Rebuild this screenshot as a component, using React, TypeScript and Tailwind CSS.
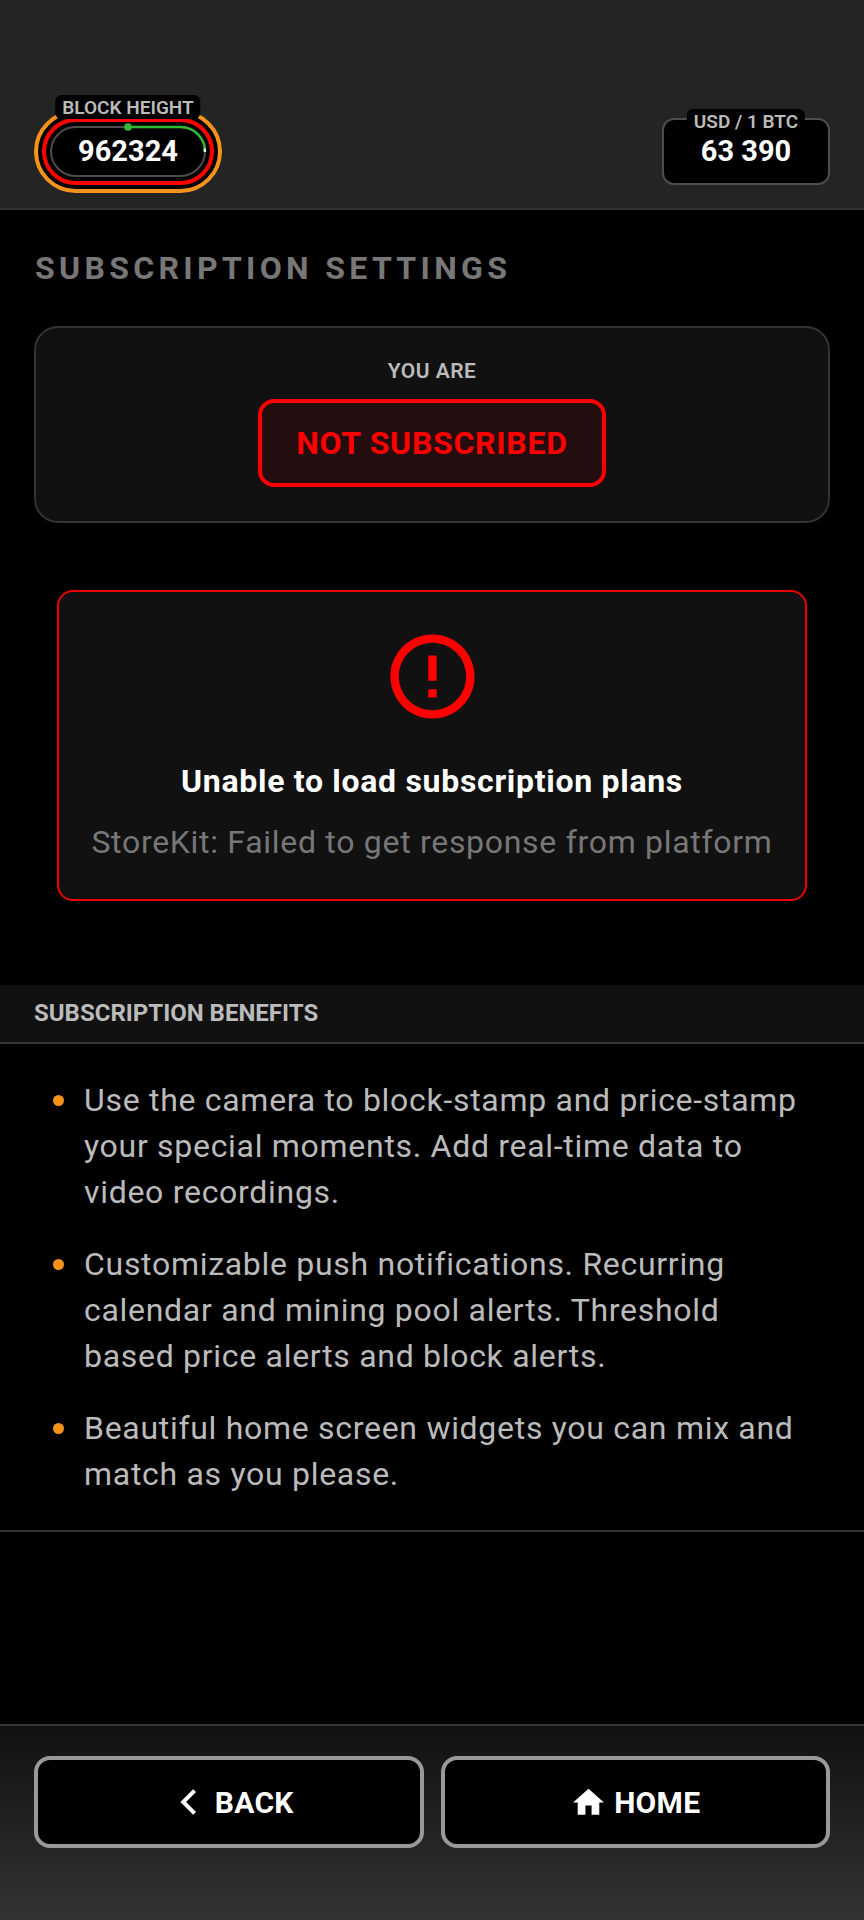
import React from 'react';
import { MdErrorOutline } from 'react-icons/md';

const BENEFITS = [
  'Use the camera to block-stamp and price-stamp your special moments. Add real-time data to video recordings.',
  'Customizable push notifications. Recurring calendar and mining pool alerts. Threshold based price alerts and block alerts.',
  'Beautiful home screen widgets you can mix and match as you please.',
];

function BlockHeight({ height }: { height: number }) {
  return (
    <div className="relative rounded-full border-4 border-[#f7931a] bg-black p-1">
      <div className="rounded-full border-4 border-[#ff0000] p-1">
        <div className="relative flex h-[51px] w-[156px] items-center justify-center">
          <span className="text-[29px] leading-none font-bold text-white">{height}</span>
        </div>
      </div>
      <span className="absolute -top-[19px] left-1/2 -translate-x-1/2 rounded-md bg-black px-[7px] pt-px text-[19px] leading-[23px] font-semibold whitespace-nowrap text-[#bbbbbb]">
        BLOCK HEIGHT
      </span>
      {/* Progress track */}
      <svg
        className="absolute top-3 left-3 overflow-visible"
        width="156"
        height="51"
        viewBox="0 0 156 51"
        fill="none"
      >
        <rect x="1" y="1" width="154" height="49" rx="24.5" stroke="#4d4d4d" strokeWidth="2" />
        <path d="M78 1H130.5A24.5 24.5 0 0 1 155 25.5" stroke="#33b933" strokeWidth="2.4" />
        <path d="M154.7 22.5L155 26" stroke="#dff5df" strokeWidth="2.4" />
        <circle cx="78" cy="1" r="3.8" fill="#33b933" />
      </svg>
    </div>
  );
}

function Price({ value }: { value: string }) {
  return (
    <div className="relative flex h-[67px] w-[168px] items-center justify-center rounded-xl border-2 border-[#4d4d4d] bg-black">
      <span className="text-[29px] leading-none font-bold text-white">{value}</span>
      <span className="absolute -top-[11px] left-1/2 -translate-x-1/2 rounded-md bg-black px-[7px] pt-px text-[19px] leading-[23px] font-semibold whitespace-nowrap text-[#bbbbbb]">
        USD / 1 BTC
      </span>
    </div>
  );
}

function NavButton({ icon, label }: { icon: React.ReactNode; label: string }) {
  return (
    <button
      type="button"
      className="flex h-[92px] flex-1 items-center justify-center gap-[7px] rounded-2xl border-4 border-[#999999] bg-black text-[30px] font-bold tracking-[0.01em] text-white"
    >
      {icon}
      {label}
    </button>
  );
}

export default function App() {
  return (
    <div className="flex min-h-screen flex-col bg-black font-['Roboto',sans-serif]">
      {/* Header */}
      <header className="flex items-center justify-between border-b-2 border-[#333333] bg-[#242424] px-[34px] pt-[110px] pb-[15px]">
        <BlockHeight height={962324} />
        <Price value="63 390" />
      </header>

      <main className="flex-1">
        <h1 className="px-[35px] pt-[38px] text-[32px] leading-[40px] font-bold tracking-[0.135em] text-[#777777]">
          SUBSCRIPTION SETTINGS
        </h1>

        {/* Status */}
        <section className="mx-[34px] mt-[38px] flex flex-col items-center rounded-3xl border-2 border-[#333333] bg-[#111111] pt-[30px] pb-[34px]">
          <p className="text-[21px] leading-[26px] font-semibold tracking-[0.022em] text-[#bbbbbb]">YOU ARE</p>
          <p className="mt-[15px] rounded-2xl border-4 border-[#ff0000] bg-[#240d0e] px-[34px] py-[20px] text-[32px] leading-[40px] font-bold tracking-[0.022em] text-[#ff0000]">
            NOT SUBSCRIBED
          </p>
        </section>

        {/* Store error */}
        <section className="mx-[57px] mt-[67px] flex flex-col items-center rounded-2xl border-2 border-[#ee0000] bg-[#111111] px-[24px] pt-[34px] pb-[34px] text-center">
          <MdErrorOutline className="size-[101px] text-[#ff0000]" />
          <h2 className="mt-[31px] text-[32px] leading-[46px] font-bold tracking-[0.022em] text-white">
            Unable to load subscription plans
          </h2>
          <p className="mt-[15px] text-[32px] leading-[46px] tracking-[0.022em] text-[#777777]">
            StoreKit: Failed to get response from platform
          </p>
        </section>

        {/* Benefits */}
        <section className="mt-[84px] border-b-2 border-[#333333]">
          <h2 className="border-b-2 border-[#333333] bg-[#111111] px-[34px] py-[14px] text-[24px] leading-[29px] font-bold text-[#bbbbbb]">
            SUBSCRIPTION BENEFITS
          </h2>
          <ul className="flex flex-col gap-[26px] px-[53px] py-[33px]">
            {BENEFITS.map((text) => (
              <li key={text} className="flex gap-[20px]">
                <span className="mt-[18px] size-[11px] shrink-0 rounded-full bg-[#f7931a]" />
                <span className="text-[32px] leading-[46px] tracking-[0.022em] text-[#bbbbbb]">{text}</span>
              </li>
            ))}
          </ul>
        </section>
      </main>

      {/* Bottom bar */}
      <footer className="flex gap-[17px] border-t-2 border-[#333333] bg-linear-to-b from-[#111111] to-[#333333] px-[34px] pt-[30px] pb-[72px]">
        <NavButton
          label="BACK"
          icon={
            <svg width="44" height="36" viewBox="0 0 44 36" fill="none">
              <path d="M30.6 6.6L19.2 18L30.6 29.4" stroke="currentColor" strokeWidth="4" />
            </svg>
          }
        />
        <NavButton
          label="HOME"
          icon={
            <svg width="37" height="37" viewBox="0 0 24 24" fill="currentColor">
              <path d="M10 20V14H14V20H19V12H22L12 3L2 12H5V20Z" />
            </svg>
          }
        />
      </footer>
    </div>
  );
}
